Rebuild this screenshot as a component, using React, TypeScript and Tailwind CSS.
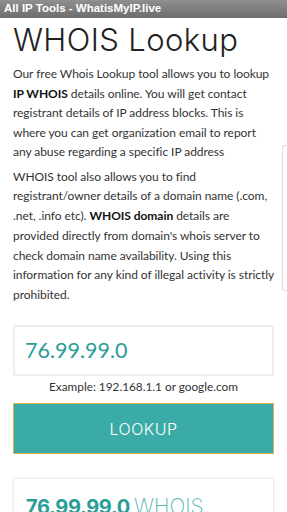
export default function App() {
  return (
    <div className="relative h-[512px] w-[287px] overflow-hidden bg-white font-['Lato',sans-serif]">
      <div className="flex h-[18px] items-center bg-gradient-to-b from-[#8f8f8f] to-[#6d6d6d] px-1 font-['Liberation_Sans',sans-serif] text-[11.5px] font-bold leading-none text-white">
        All IP Tools - WhatisMyIP.live
      </div>

      <div className="px-[13px]">
        <h1 className="mt-[2px] font-['Inter',sans-serif] text-[31px] font-light leading-[40px] tracking-[0.4px] text-[#222]">
          WHOIS Lookup
        </h1>

        <p className="mt-[4px] text-[12px] leading-[19.5px] tracking-[-0.05px] text-[#333]">
          Our free Whois Lookup tool allows you to lookup{" "}
          <b className="font-bold text-[#111]">IP WHOIS</b> details online.
          You will get contact registrant details of IP address blocks. This is
          where you can get organization email to report any abuse regarding a
          specific IP address
        </p>

        <p className="mt-[5px] text-[12px] leading-[19.8px] tracking-[-0.05px] text-[#333]">
          WHOIS tool also allows you to find registrant/owner details of a
          domain name (.com, .net, .info etc).{" "}
          <b className="font-bold text-[#111]">WHOIS domain</b> details are
          provided directly from domain's whois server to check domain name
          availability. Using this information for any kind of illegal activity
          is strictly prohibited.
        </p>

        <div className="mt-[20px] flex h-[51px] items-center border-2 border-[#eeeeee] px-[10px] text-[21.5px] text-[#2a9d96]">
          76.99.99.0
        </div>
        <p className="mt-[2px] text-center text-[11.8px] leading-[18px] text-[#333]">
          Example: 192.168.1.1 or google.com
        </p>

        <button className="mt-[7px] flex h-[51px] w-full items-center justify-center border border-[#d6b24c] bg-[#3aaba6] font-['Inter',sans-serif] text-[16px] font-light tracking-[0.5px] text-white">
          LOOKUP
        </button>

        <div className="mt-[24px] h-[60px] border border-[#ececec] px-[12px] pt-[17px] leading-none shadow-[0_0_3px_rgba(0,0,0,0.06)]">
          <span className="font-['Inter',sans-serif] text-[20px] font-bold tracking-[-0.3px] text-[#2a9d96]">
            76.99.99.0
          </span>{" "}
          <span className="font-['Inter',sans-serif] text-[21px] font-extralight text-[#4fb6b1]">
            WHOIS
          </span>
        </div>
      </div>

      <div className="absolute right-0 top-[145px] h-[146px] w-[5px] rounded-l-[3px] border border-r-0 border-[#dcdcdc]" />
    </div>
  );
}
